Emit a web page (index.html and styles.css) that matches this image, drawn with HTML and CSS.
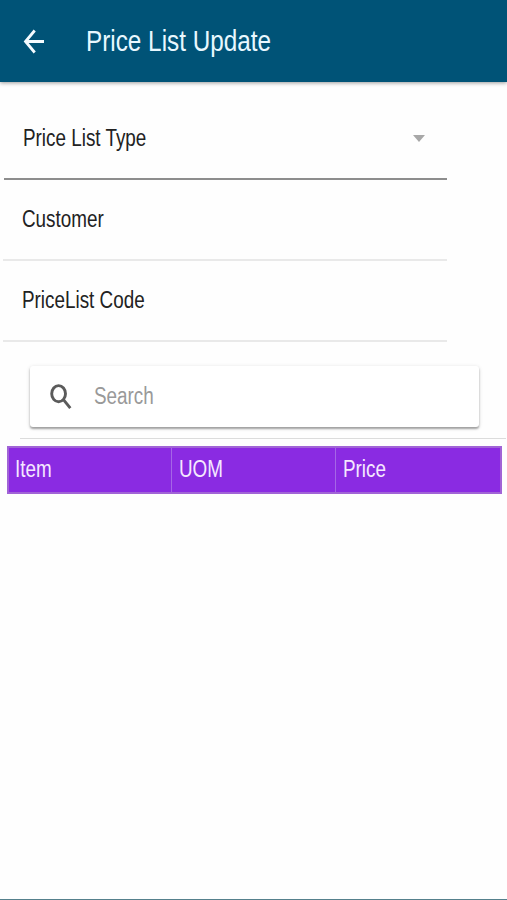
FILE: index.html
```html
<!DOCTYPE html>
<html lang="en">
<head>
<meta charset="utf-8">
<title>Price List Update</title>
<link rel="stylesheet" href="styles.css">
</head>
<body>
<header class="toolbar">
  <svg class="back" viewBox="0 0 24 26" width="24" height="26"><path d="M22 13.5H4M12.7 2.5L3.5 13.5L12.7 24.5"/></svg>
  <h1><span class="text title">Price List Update</span></h1>
</header>
<main>
  <section class="form">
    <div class="row select"><span class="text type">Price List Type</span><svg class="caret" viewBox="0 0 12 7" width="12" height="7"><path d="M0 0H12L6 7Z"/></svg></div>
    <div class="row"><span class="text customer">Customer</span></div>
    <div class="row"><span class="text code">PriceList Code</span></div>
  </section>
  <section class="search-area">
    <div class="search">
      <svg class="lens" viewBox="0 0 22 26" width="22" height="26"><ellipse cx="8.6" cy="9.7" rx="6.9" ry="8.1"/><path d="M13 15.2L20.3 24.2"/></svg>
      <span class="text hint">Search</span>
    </div>
  </section>
  <div class="table">
    <div class="cell"><span class="text item">Item</span></div>
    <div class="cell"><span class="text uom">UOM</span></div>
    <div class="cell"><span class="text price">Price</span></div>
  </div>
</main>
</body>
</html>
```
FILE: styles.css
```css
* { box-sizing: border-box; }
body {
  margin: 0;
  height: 900px;
  overflow: hidden;
  background: #fefefe;
  border-bottom: 1px solid #55808c;
  font-family: "Liberation Sans", Arial, sans-serif;
  font-size: 23px;
  color: #222;
}
svg { display: block; flex: none; }
.text {
  display: inline-block;
  white-space: nowrap;
  transform-origin: 0 50%;
  transform: scaleX(0.82);
}
.toolbar {
  display: flex;
  align-items: center;
  height: 82px;
  padding-left: 22px;
  background: #005377;
  color: #e8f8ff;
  box-shadow: 0 1px 4px rgba(0, 0, 0, 0.4);
}
.back { fill: none; stroke: #f4fbff; stroke-width: 2.8; }
h1 {
  margin: 0 0 0 39.5px;
  font-size: 29px;
  font-weight: 400;
  line-height: 34px;
}
.title { transform: scaleX(0.838); }
.form { width: 447px; padding: 16px 0 0 3px; }
.row {
  display: flex;
  align-items: center;
  height: 81px;
  padding-left: 18.5px;
  border-bottom: 2px solid #e9e9e9;
}
.select {
  justify-content: space-between;
  height: 82px;
  margin-left: 1px;
  padding-right: 22px;
  border-bottom-color: #8d8d8d;
}
.caret { fill: #a8a8a8; }
.search-area {
  margin-left: 20px;
  margin-right: 1px;
  padding: 24px 27px 11px 10px;
  border-bottom: 1px solid #dcdcdc;
}
.search {
  display: flex;
  align-items: center;
  height: 61px;
  padding-left: 20px;
  background: #fff;
  border-radius: 3px;
  box-shadow: 0 2px 2px rgba(0, 0, 0, 0.3), 0 1px 4px rgba(0, 0, 0, 0.15);
}
.lens { fill: none; stroke: #5b5b5b; stroke-width: 2.9; }
.hint { margin-left: 22px; color: #999; }
.table {
  display: grid;
  grid-template-columns: 163px 164px 1fr;
  margin: 7px 5px 0 7px;
  height: 48px;
  background: #8a2be2;
  border: 2px solid #a164d6;
  color: #f5e8ff;
}
.cell {
  display: flex;
  align-items: center;
  padding: 0 0 2px 7px;
  border-right: 1px solid #a566e6;
}
.cell:first-child { padding-left: 6px; }
.cell:last-child { border-right: 0; }
```
